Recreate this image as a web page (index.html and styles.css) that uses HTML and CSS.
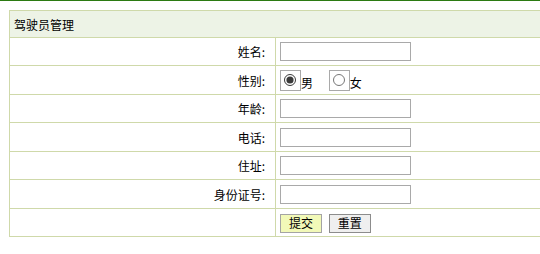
FILE: index.html
```html
<!DOCTYPE html>
<html lang="zh-CN">
  <head>
    <meta charset="UTF-8" />
    <title>驾驶员管理</title>
    <link rel="stylesheet" href="styles.css">
  </head>
  <body>
    <div class="page">
      <form class="driver-form">
        <table class="form-table">
          <tr class="head">
            <th colspan="2">驾驶员管理</th>
          </tr>
          <tr>
            <td class="label">姓名:</td>
            <td class="field"><input type="text" class="text" /></td>
          </tr>
          <tr>
            <td class="label">性别:</td>
            <td class="field">
              <label class="choice"><span class="radio-box"><input type="radio" name="sex" checked /></span>男</label>
              <label class="choice"><span class="radio-box"><input type="radio" name="sex" /></span>女</label>
            </td>
          </tr>
          <tr>
            <td class="label">年龄:</td>
            <td class="field"><input type="text" class="text" /></td>
          </tr>
          <tr>
            <td class="label">电话:</td>
            <td class="field"><input type="text" class="text" /></td>
          </tr>
          <tr>
            <td class="label">住址:</td>
            <td class="field"><input type="text" class="text" /></td>
          </tr>
          <tr>
            <td class="label">身份证号:</td>
            <td class="field"><input type="text" class="text" /></td>
          </tr>
          <tr>
            <td class="label"></td>
            <td class="field">
              <button type="submit" class="btn btn-submit">提交</button>
              <button type="reset" class="btn">重置</button>
            </td>
          </tr>
        </table>
      </form>
    </div>
  </body>
</html>
```

FILE: styles.css
```css
* {
  box-sizing: border-box;
}
body {
  margin: 0;
  font-family: "Noto Sans CJK SC", "DejaVu Sans", sans-serif;
  font-size: 12px;
  color: #000;
  background: #fff;
  overflow: hidden;
}
.page {
  border-top: 1px solid #2b7a12;
  padding: 9px 0 0 9px;
  width: 540px;
  overflow: hidden;
}
.driver-form {
  margin: 0;
}
.form-table {
  border-collapse: collapse;
  width: 560px;
}
.form-table th,
.form-table td {
  border: 1px solid #cfd9aa;
  padding: 0;
}
.head th {
  background: #edf3e6;
  height: 27px;
  text-align: left;
  font-weight: normal;
  padding-left: 4px;
}
.form-table tr:nth-child(even) td {
  height: 28px;
}
.form-table tr:nth-child(odd) td {
  height: 29px;
}
.label {
  width: 266px;
  text-align: right;
  padding-right: 10px !important;
}
.field {
  padding-left: 4px !important;
}
.text {
  display: block;
  width: 131px;
  height: 19px;
  margin: 0;
  border: 1px solid #a9a9a9;
  font-size: 12px;
}
.choice {
  display: inline-flex;
  align-items: flex-end;
  margin-right: 13px;
  vertical-align: middle;
}
.radio-box {
  display: inline-block;
  width: 21px;
  height: 21px;
  border: 1px solid #a9a9a9;
}
.radio-box input {
  width: 12px;
  height: 12px;
  margin: 3px 0 0 3px;
  display: block;
  accent-color: #3a3a3a;
}
.btn {
  font-family: inherit;
  font-size: 12px;
  height: 19px;
  width: 42px;
  padding: 0;
  margin: 0 4px 0 0;
  border: 1px solid #8c8c8c;
  background: #efefef;
  line-height: 16px;
  vertical-align: middle;
}
.btn-submit {
  background: #f2f9b8;
  border-color: #a4a4a4;
}
```
